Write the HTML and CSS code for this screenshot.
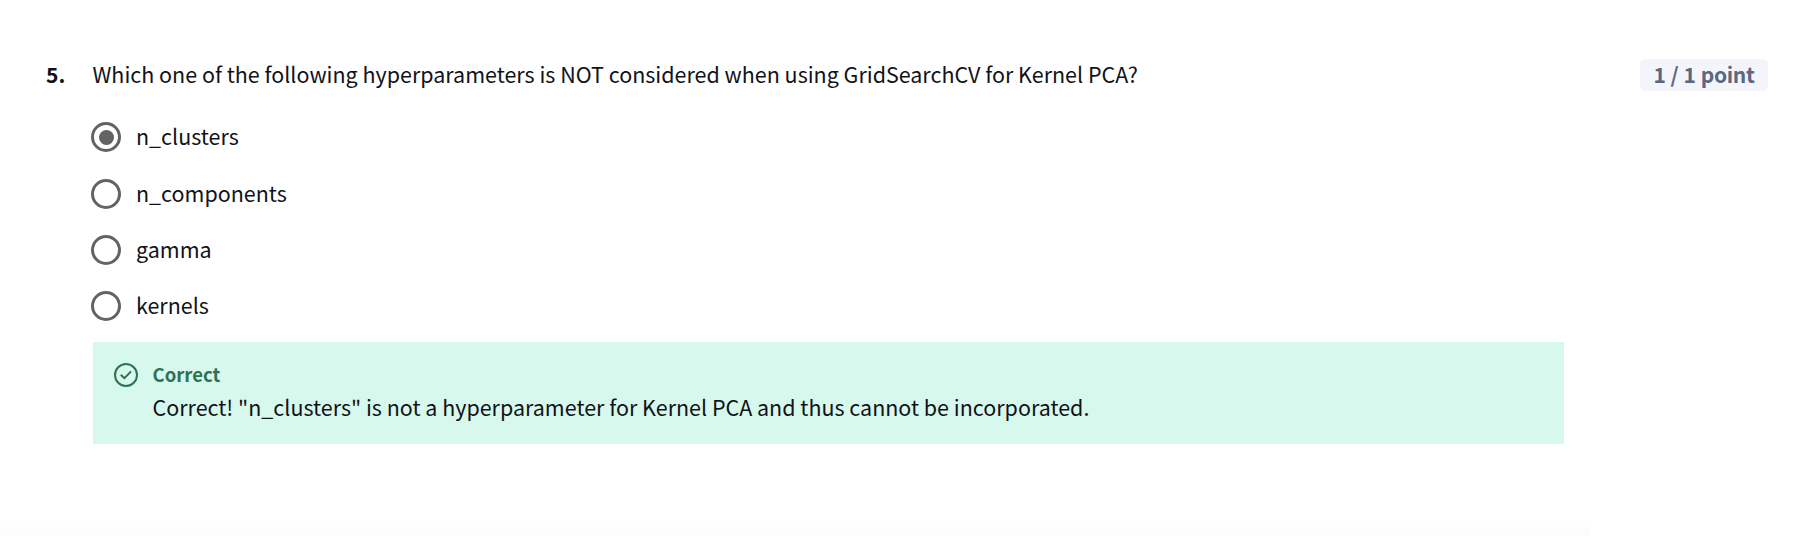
FILE: index.html
```html
<!DOCTYPE html>
<html lang="en">
<head>
<meta charset="utf-8">
<title>Quiz question</title>
<link rel="stylesheet" href="styles.css">
</head>
<body>
<main class="question">
  <div class="number">5.</div>
  <section class="content">
    <p class="prompt"><span>Which one of the following hyperparameters is NOT considered when using GridSearchCV for Kernel PCA?</span></p>
    <div class="options">
      <label class="option first"><span class="radio checked"></span><span class="label">n_clusters</span></label>
      <label class="option"><span class="radio"></span><span class="label">n_components</span></label>
      <label class="option"><span class="radio"></span><span class="label">gamma</span></label>
      <label class="option"><span class="radio"></span><span class="label">kernels</span></label>
    </div>
    <div class="feedback">
      <svg class="check" viewBox="0 0 24 24" fill="none" stroke="#2f7253" stroke-width="2"><circle cx="12" cy="12" r="11"/><path d="M6.8 11.8l3.6 3.4 6.7-6.8"/></svg>
      <div class="message">
        <div class="verdict"><span>Correct</span></div>
        <div class="explanation"><span>Correct! "n_clusters" is not a hyperparameter for Kernel PCA and thus cannot be incorporated.</span></div>
      </div>
    </div>
  </section>
  <div class="points"><span>1 / 1 point</span></div>
</main>
<div class="footer-shade"></div>
</body>
</html>
```
FILE: styles.css
```css
* { box-sizing: border-box; }
body {
  margin: 0;
  height: 536px;
  display: flex;
  flex-direction: column;
  justify-content: space-between;
  overflow: hidden;
  background: #fff;
  color: #111318;
  font-family: "Noto Sans CJK SC", "Open Sans", sans-serif;
  font-size: 21.48px;
  line-height: 30px;
}
.question { display: flex; padding: 59px 34px 0 46px; }
.number { width: 46.5px; font-size: 21px; font-weight: 700; }
.content { width: 1471px; margin-left: 0.5px; }
.prompt { margin: 0 0 0 -0.5px; white-space: nowrap; }
.options { padding-top: 32px; margin-left: -2px; }
.option { display: flex; align-items: center; gap: 15px; height: 32px; margin-bottom: 24px; }
.option.first { margin-bottom: 25px; }
.label { padding-bottom: 2px; }
.radio {
  flex: none;
  display: grid;
  place-items: center;
  width: 30px;
  height: 30px;
  border: 3px solid #636363;
  border-radius: 50%;
}
.checked::after { content: ""; width: 15px; height: 15px; border-radius: 50%; background: #636363; }
.feedback {
  display: flex;
  gap: 14.5px;
  height: 102px;
  margin-top: -4px;
  padding: 17px 21px;
  background: #d7f8ec;
}
.check { width: 24px; height: 24px; margin-top: 4px; flex: none; }
.verdict { color: #2f7253; font-size: 18.5px; font-weight: 700; }
.explanation { line-height: 36px; white-space: nowrap; }
.points {
  margin-left: auto;
  width: 128px;
  height: 32px;
  border-radius: 6px;
  background: #f3f5fa;
  color: #5b6780;
  font-size: 21px;
  font-weight: 700;
  letter-spacing: -0.3px;
  word-spacing: 0.6px;
  text-align: center;
  white-space: nowrap;
}
.footer-shade { height: 15px; width: 1590px; background: linear-gradient(#fefefe, #fcfcfc); }
```
